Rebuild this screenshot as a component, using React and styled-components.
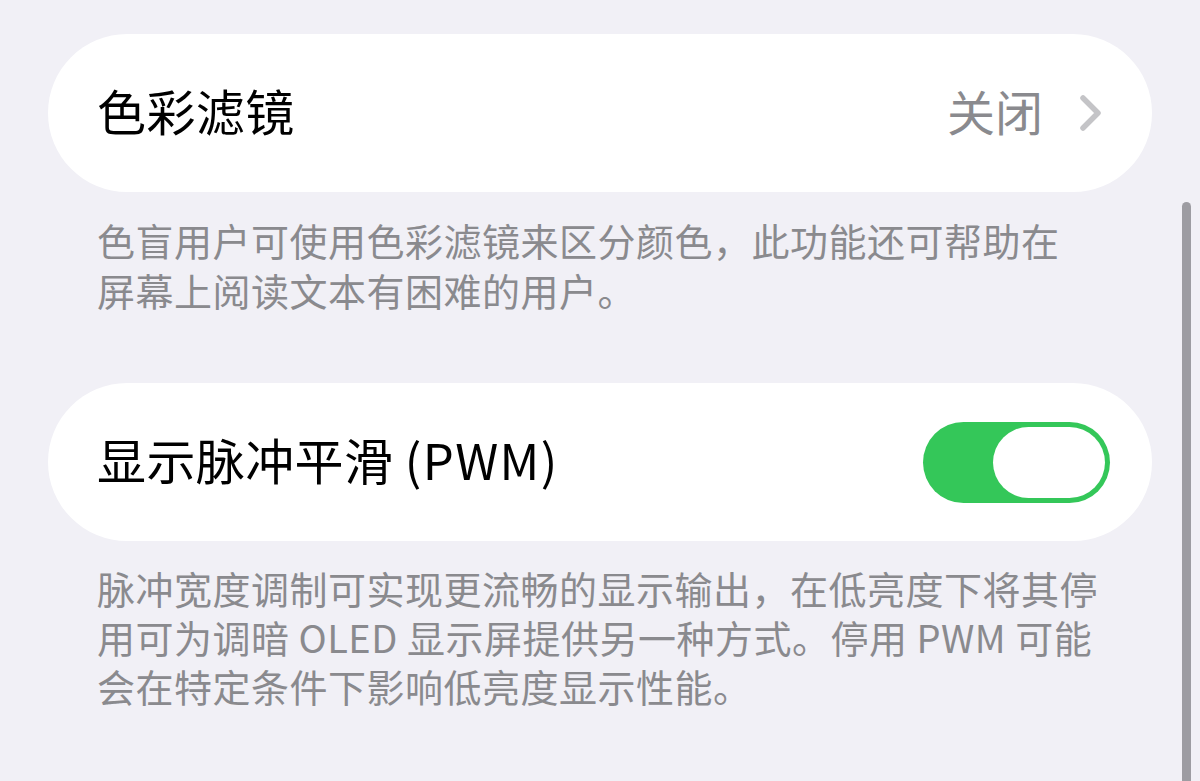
import React from "react";
import styled, { createGlobalStyle } from "styled-components";

const GlobalStyle = createGlobalStyle`
  html, body {
    margin: 0;
    padding: 0;
    background: #f1f0f6;
  }
  body {
    font-family: "Noto Sans CJK SC", "Noto Sans", sans-serif;
    -webkit-font-smoothing: antialiased;
  }
`;

const Page = styled.div`
  position: relative;
  width: 1200px;
  height: 781px;
  overflow: hidden;
  background: #f1f0f6;
  padding-top: 34px;
  box-sizing: border-box;
`;

const Section = styled.section`
  margin: 0 48px ${(p) => p.gap || 0}px 48px;
`;

const Card = styled.div`
  height: 158px;
  border-radius: 79px;
  background: #ffffff;
  display: flex;
  align-items: center;
  justify-content: space-between;
  padding: 0 ${(p) => p.padRight || 49}px 0 49px;
  box-sizing: border-box;
`;

const Title = styled.div`
  font-size: 49px;
  color: #000;
  letter-spacing: 0.4px;
  line-height: 1;
  margin-bottom: 8px;
`;

const Latin = styled.span`
  letter-spacing: 1.4px;
`;

const Value = styled.div`
  display: flex;
  align-items: center;
  gap: 36px;
  font-size: 48px;
  color: #8a8a8e;
  line-height: 1;
  margin-bottom: 6px;
`;

const Desc = styled.p`
  margin: ${(p) => p.top || 23}px 0 0 49px;
  font-size: 38px;
  letter-spacing: 0.5px;
  line-height: ${(p) => p.lh || 50}px;
  color: #8a8a8e;
  white-space: nowrap;
`;

const Toggle = styled.div`
  width: 187px;
  height: 81px;
  border-radius: 41px;
  background: #34c759;
  display: flex;
  justify-content: flex-end;
  padding: 5px;
  box-sizing: border-box;
`;

const Knob = styled.div`
  width: 112px;
  height: 71px;
  border-radius: 36px;
  background: #ffffff;
`;

const ScrollBar = styled.div`
  position: absolute;
  left: 1182px;
  top: 202px;
  width: 9px;
  bottom: -10px;
  border-radius: 5px;
  background: #9d9ca2;
`;

const Chevron = () => (
  <svg width="24" height="38" viewBox="0 0 24 38" style={{ marginTop: 6 }}>
    <polyline
      points="4,4 19,19 4,34"
      fill="none"
      stroke="#c4c4c7"
      strokeWidth="5.5"
      strokeLinecap="round"
      strokeLinejoin="round"
    />
  </svg>
);

export default function App() {
  return (
    <Page>
      <GlobalStyle />
      <Section gap={68}>
        <Card>
          <Title>色彩滤镜</Title>
          <Value>
            关闭
            <Chevron />
          </Value>
        </Card>
        <Desc>
          色盲用户可使用色彩滤镜来区分颜色，此功能还可帮助在
          <br />
          屏幕上阅读文本有困难的用户。
        </Desc>
      </Section>
      <Section>
        <Card padRight={42}>
          <Title>
            显示脉冲平滑 <Latin>(PWM)</Latin>
          </Title>
          <Toggle>
            <Knob />
          </Toggle>
        </Card>
        <Desc top={22} lh={49}>
          脉冲宽度调制可实现更流畅的显示输出，在低亮度下将其停
          <br />
          用可为调暗 OLED 显示屏提供另一种方式。停用 PWM 可能
          <br />
          会在特定条件下影响低亮度显示性能。
        </Desc>
      </Section>
      <ScrollBar />
    </Page>
  );
}
